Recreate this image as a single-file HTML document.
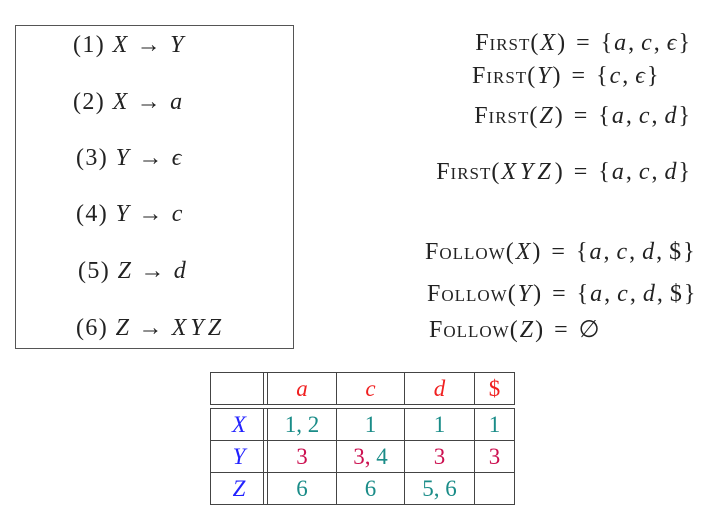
<!DOCTYPE html>
<html><head><style>
body{margin:0;width:704px;height:516px;background:#fff;position:relative;overflow:hidden;font-family:"Liberation Serif","DejaVu Serif",serif;color:#222;font-size:24px}
.a{position:absolute;white-space:nowrap;line-height:28px;letter-spacing:1.4px}
.w{letter-spacing:2px}
i{font-style:italic}
.o{margin:0 9px}
.p{margin:0 8px}
.c{margin-right:5px}
.x{letter-spacing:4px}
.sc{font-variant:small-caps;letter-spacing:1px}
.box{position:absolute;left:15px;top:25px;width:277px;height:322px;border:1px solid #555}
table{position:absolute;border-collapse:collapse;font-size:23px}
td{border:1px solid #444;text-align:center;padding:0;height:31px}
.r{color:#f02020}.t{color:#1a8c88}.m{color:#cc1050}.b{color:#2222ff}
.v{position:absolute;width:1px;background:#444}
</style></head><body>
<div class="box"></div>
<div class="a" style="left:73px;top:31px">(1) <i>X</i><span class="p">→</span><i>Y</i></div>
<div class="a" style="left:73px;top:88px">(2) <i>X</i><span class="p">→</span><i>a</i></div>
<div class="a" style="left:76px;top:144px">(3) <i>Y</i><span class="p">→</span><i>ϵ</i></div>
<div class="a" style="left:76px;top:200px">(4) <i>Y</i><span class="p">→</span><i>c</i></div>
<div class="a" style="left:78px;top:257px">(5) <i>Z</i><span class="p">→</span><i>d</i></div>
<div class="a" style="left:76px;top:314px">(6) <i>Z</i><span class="p">→</span><i class="x">XYZ</i></div>

<div class="a w" style="right:12px;top:29px"><span class="sc">First</span>(<i>X</i>)<span class="o">=</span>{<i>a</i>,<span class="c"></span><i>c</i>,<span class="c"></span><i>ϵ</i>}</div>
<div class="a w" style="left:472px;top:62px"><span class="sc">First</span>(<i>Y</i>)<span class="o">=</span>{<i>c</i>,<span class="c"></span><i>ϵ</i>}</div>
<div class="a w" style="right:12px;top:102px"><span class="sc">First</span>(<i>Z</i>)<span class="o">=</span>{<i>a</i>,<span class="c"></span><i>c</i>,<span class="c"></span><i>d</i>}</div>
<div class="a w" style="right:12px;top:158px"><span class="sc">First</span>(<i class="x">XYZ</i>)<span class="o">=</span>{<i>a</i>,<span class="c"></span><i>c</i>,<span class="c"></span><i>d</i>}</div>
<div class="a w" style="left:425px;top:238px"><span class="sc">Follow</span>(<i>X</i>)<span class="o">=</span>{<i>a</i>,<span class="c"></span><i>c</i>,<span class="c"></span><i>d</i>,<span class="c"></span>$}</div>
<div class="a w" style="left:427px;top:280px"><span class="sc">Follow</span>(<i>Y</i>)<span class="o">=</span>{<i>a</i>,<span class="c"></span><i>c</i>,<span class="c"></span><i>d</i>,<span class="c"></span>$}</div>
<div class="a w" style="left:429px;top:316px"><span class="sc">Follow</span>(<i>Z</i>)<span class="o">=</span>∅</div>

<table style="left:210px;top:372px">
<tr><td style="width:56px"></td><td class="r" style="width:68px"><i>a</i></td><td class="r" style="width:67px"><i>c</i></td><td class="r" style="width:69px"><i>d</i></td><td class="r" style="width:39px">$</td></tr>
</table>
<table style="left:210px;top:408px">
<tr><td class="b" style="width:56px"><i>X</i></td><td class="t" style="width:68px">1, 2</td><td class="t" style="width:67px">1</td><td class="t" style="width:69px">1</td><td class="t" style="width:39px">1</td></tr>
<tr><td class="b"><i>Y</i></td><td class="m">3</td><td class="m">3, <span class="t">4</span></td><td class="m">3</td><td class="m">3</td></tr>
<tr><td class="b"><i>Z</i></td><td class="t">6</td><td class="t">6</td><td class="t">5, 6</td><td></td></tr>
</table>
<div class="v" style="left:263px;top:372px;height:33px"></div>
<div class="v" style="left:263px;top:408px;height:97px"></div>
</body></html>
